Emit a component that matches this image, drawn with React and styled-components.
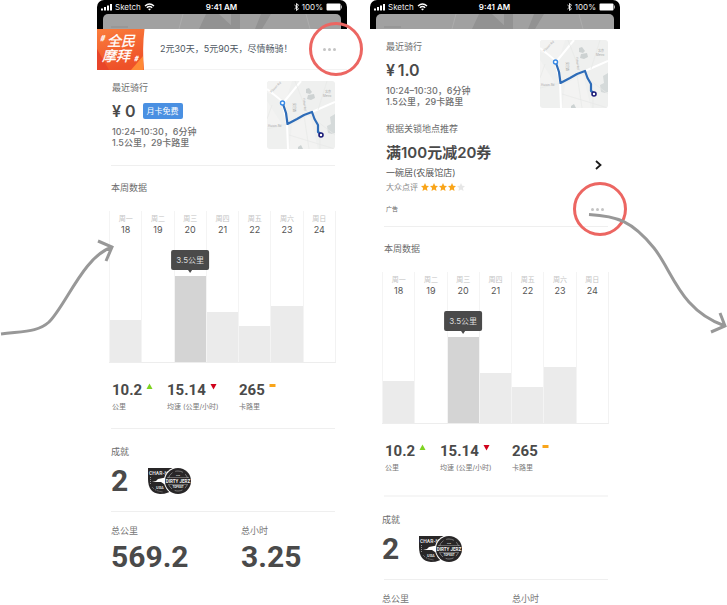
import React from "react";
import styled, { createGlobalStyle, css } from "styled-components";

const GlobalStyle = createGlobalStyle`
  *, *::before, *::after { box-sizing: border-box; }
  body {
    margin: 0;
    background: #fff;
    color: #4a4a4a;
    font-family: Inter, "Noto Sans CJK SC", sans-serif;
    font-size: 9px;
    line-height: 12px;
  }
  h1, h2, p, dl, dt, dd, ul { margin: 0; padding: 0; font: inherit; }
  button { border: 0; padding: 0; background: none; font: inherit; color: inherit; cursor: pointer; }
`;

const Board = styled.main`
  position: relative;
  display: grid;
  grid-template-columns: 97fr 250fr 23fr 250fr 107fr;
  min-height: 100vh;
  overflow: hidden;
`;

const Phone = styled.article`
  grid-column: ${(p) => p.$column};
  min-width: 0;
`;

const TopShade = styled.header`
  background: #000;
  border-radius: 7px 7px 0 0;
`;

const StatusBar = styled.div`
  display: grid;
  grid-template-columns: 1fr auto 1fr;
  align-items: center;
  height: 14px;
  padding: 0 5px 0 4px;
  color: #eee;
  font-size: 8px;
  line-height: 14px;
`;

const StatusGroup = styled.div`
  display: flex;
  align-items: center;
  justify-content: ${(p) => (p.$end ? "flex-end" : "flex-start")};
  gap: 3px;
`;

const Clock = styled.time`
  font-weight: 600;
  color: #fff;
`;

const Backdrop = styled.svg`
  display: block;
  width: calc(100% - 12px);
  height: 15px;
  margin: 0 6px;
  background: #a1a1a1;
  border-radius: 5px 5px 0 0;
`;

const Banner = styled.section`
  display: flex;
  align-items: center;
  height: 41px;
  padding-right: 11px;
  border-bottom: 1px solid #f3f3f3;
`;

const BannerArt = styled.svg`
  flex: none;
  width: 48px;
  height: 41px;
`;

const BannerText = styled.p`
  flex: 1;
  padding-left: 15px;
  font-size: 9px;
  color: #4d5661;
  white-space: nowrap;
`;

const MoreButton = styled.button`
  position: relative;
  display: flex;
  align-items: center;
  justify-content: center;
  gap: 2px;
  width: 14px;
  height: 10px;
  flex: none;

  span {
    width: 3px;
    height: 3px;
    border-radius: 50%;
    background: #c4c4c4;
  }

  &::after {
    content: "";
    position: absolute;
    top: 50%;
    left: ${(p) => p.$ringLeft};
    width: 54px;
    height: 54px;
    margin-top: -27px;
    border: 3px solid #ec6662;
    border-radius: 50%;
    pointer-events: none;
  }
`;

const Ride = styled.section`
  display: flex;
  justify-content: space-between;
  align-items: flex-start;
  padding: 11px 12px 0 ${(p) => p.$inset};
`;

const Title = styled.h2`
  font-size: 9px;
  line-height: 14px;
  color: #6c6c6c;
`;

const PriceRow = styled.div`
  display: flex;
  align-items: center;
  gap: 7px;
  height: 20px;
  margin: 6px 0 5px;
`;

const Price = styled.strong`
  font-size: 16px;
  line-height: 20px;
  font-weight: 600;
`;

const PassTag = styled.span`
  padding: 0 4px;
  border-radius: 2px;
  background: #4a90e2;
  color: #fff;
  font-size: 8px;
  line-height: 16px;
`;

const RideFact = styled.p`
  font-size: 9px;
  line-height: 11px;
  font-weight: 500;
  color: #707070;
`;

const MapPicture = styled.svg`
  flex: none;
  width: 68px;
  height: 68px;
  border-radius: 3px;
`;

const Rule = styled.hr`
  height: ${(p) => (p.$thick ? "2px" : "1px")};
  margin: ${(p) => p.$top} 12px 0 14px;
  border: 0;
  background: ${(p) => (p.$thick ? "#f6f6f6" : "#efefef")};
`;

const Coupon = styled.section`
  padding: 14px 16px 0;
`;

const CouponLink = styled.a`
  display: flex;
  align-items: center;
  justify-content: space-between;
  color: inherit;
  text-decoration: none;
`;

const Offer = styled.h1`
  margin: 6px 0 2px;
  font-size: 15px;
  line-height: 22px;
  font-weight: 600;
  white-space: nowrap;
`;

const Shop = styled.p`
  font-size: 9px;
  line-height: 14px;
  color: #555;
`;

const Rating = styled.div`
  display: flex;
  align-items: center;
  gap: 3px;
  height: 12px;
  margin-top: 1px;
  font-size: 8px;
  color: #888;
`;

const Stars = styled.span`
  display: flex;
  gap: 1px;
`;

const StarIcon = styled.svg`
  width: 8px;
  height: 8px;
  fill: ${(p) => (p.$on ? "#f9a51a" : "#e6e6e6")};
`;

const AdRow = styled.div`
  display: flex;
  align-items: center;
  justify-content: space-between;
  margin-top: 10px;
  font-size: 6px;
  line-height: 12px;
  color: #666;
`;

const Week = styled.section`
  padding: 15px 11px 0 12px;
`;

const WeekTitle = styled(Title)`
  padding-left: 2px;
`;

const Chart = styled.ul`
  display: grid;
  grid-template-columns: repeat(7, 1fr);
  height: 152px;
  margin-top: 16px;
  list-style: none;
  border-right: 1px solid #f2f2f2;
  border-bottom: 1px solid #ededed;
`;

const Day = styled.li`
  display: flex;
  flex-direction: column;
  align-items: center;
  padding-top: 3px;
  border-left: 1px solid #f4f4f4;
`;

const DayName = styled.span`
  font-size: 7px;
  line-height: 10px;
  color: #c4c4c4;
`;

const DayNumber = styled.span`
  font-size: 9px;
  line-height: 12px;
  color: #555;
`;

const Bar = styled.div`
  position: relative;
  width: 100%;
  margin-top: auto;
  background: ${(p) => (p.$active ? "#d4d4d4" : "#ebebeb")};
`;

const Tip = styled.span`
  position: absolute;
  bottom: calc(100% + 6px);
  left: 50%;
  transform: translateX(-50%);
  padding: 0 5px;
  border-radius: 2px;
  background: #4a4a4a;
  color: #ddd;
  font-size: 8px;
  line-height: 20px;
  white-space: nowrap;

  &::after {
    content: "";
    position: absolute;
    top: 100%;
    left: 50%;
    margin-left: -2px;
    border: 2px solid transparent;
    border-top: 3px solid #4a4a4a;
    border-bottom: 0;
  }
`;

const Stats = styled.dl`
  display: grid;
  grid-template-columns: 55px 72px 1fr;
  padding: 17px 12px 0 15px;
`;

const Stat = styled.div`
  display: flex;
  flex-direction: column-reverse;
  gap: 1px;
`;

const StatLabel = styled.dt`
  font-size: 7px;
  line-height: 12px;
  color: #777;
  white-space: nowrap;
`;

const din = css`
  font-family: "Liberation Sans Narrow", Roboto, "Noto Sans CJK SC", sans-serif;
  font-weight: 700;
  color: #4a4a4a;
`;

const StatValue = styled.dd`
  ${din}
  display: flex;
  gap: 4px;
  font-size: 15px;
  line-height: 20px;
`;

const Trend = styled.svg`
  width: 7px;
  height: 7px;
  margin-top: 3px;
`;

const Awards = styled.section`
  padding: ${(p) => p.$top} 12px 0 ${(p) => p.$inset};
`;

const AwardRow = styled.div`
  display: flex;
  align-items: center;
  gap: 19px;
  height: 32px;
  margin-top: 6px;
`;

const BigNumber = styled.strong`
  ${din}
  font-size: 30px;
  line-height: 32px;
`;

const Medals = styled.svg`
  width: 45px;
  height: 28px;
`;

const Totals = styled.section`
  display: grid;
  grid-template-columns: 130px 1fr;
  padding: 13px 12px 0 ${(p) => p.$inset};
`;

const TotalCell = styled.div`
  display: flex;
  flex-direction: column;
  gap: 4px;
`;

const TotalLabel = styled.span`
  font-size: 9px;
  line-height: 12px;
  color: #777;
`;

const Arrow = styled.svg`
  position: absolute;
  top: ${(p) => p.$top};
  ${(p) => (p.$right ? "right: 0;" : "left: 0;")}
  pointer-events: none;
  fill: none;
  stroke: #989898;
  stroke-width: 3;
`;

function PhoneTop() {
  return (
    <TopShade>
      <StatusBar>
        <StatusGroup>
          <svg width="11" height="7" viewBox="0 0 11 7" fill="#fff" aria-hidden="true">
            <rect x="0" y="4.5" width="2" height="2" />
            <rect x="3" y="3" width="2" height="3.5" />
            <rect x="6" y="1.5" width="2" height="5" />
            <rect x="9" y="0" width="2" height="6.5" />
          </svg>
          <span>Sketch</span>
          <svg width="11" height="8" viewBox="0 0 11 8" fill="none" stroke="#fff" strokeWidth="1.4" aria-hidden="true">
            <path d="M1 3Q5.5-1 10 3M2.8 4.8Q5.5 2.4 8.2 4.8" />
            <path d="M4 6l1.5 1.6L7 6Q5.5 5 4 6z" fill="#fff" stroke="none" />
          </svg>
        </StatusGroup>
        <Clock>9:41 AM</Clock>
        <StatusGroup $end>
          <svg width="5" height="8" viewBox="0 0 5 8" fill="none" stroke="#fff" strokeWidth="0.9" aria-hidden="true">
            <path d="M.5 2l4 3.8L2.5 7.5V.5l2 1.7-4 3.8" />
          </svg>
          <span>100%</span>
          <svg width="16" height="8" viewBox="0 0 16 8" aria-hidden="true">
            <rect x="0.5" y="0.5" width="14" height="7" rx="1" fill="#fff" />
            <rect x="15" y="2.5" width="1" height="3" fill="#aaa" />
          </svg>
        </StatusGroup>
      </StatusBar>
      <Backdrop viewBox="0 0 238 15" preserveAspectRatio="none" aria-hidden="true">
        <path d="M96 15L103 0h13l16 15zM128 0h9v15h-9zM152 15L158 0h10l-9 15z" fill="#929292" />
        <path d="M8 13h17" stroke="#8d8d8d" strokeWidth="1" />
        <path d="M76 15l4-15M203 0l4 15" stroke="#b2b2b2" strokeWidth="0.7" />
      </Backdrop>
    </TopShade>
  );
}

function More({ ringLeft }) {
  return (
    <MoreButton type="button" aria-label="更多" $ringLeft={ringLeft}>
      <span />
      <span />
      <span />
    </MoreButton>
  );
}

function RouteMap() {
  return (
    <MapPicture viewBox="0 0 68 68" role="img" aria-label="骑行路线">
      <rect width="68" height="68" fill="#eff0ef" />
      <path d="M0 0h25L19 19 0 12zM0 20l16 25H0zM25 44l18-10 8 34H22z" fill="#f3f3f2" />
      <path d="M39 8l3-1 3 4-2 2-4-1zM41 14l6-1 1 4-4 2-4-1z" fill="#cdd2d2" />
      <path d="M68 33l-5 3 1 7-4 2 1 7 4 1 3-1z" fill="#d5dada" />
      <path d="M31 66l3-2 2 4h-5z" fill="#ccd2d2" />
      <path d="M0 8l15 12 5 22 1 26M16 22L34 0M45 31l23-10" stroke="#fff" strokeWidth="2" fill="none" />
      <path d="M28 0l12 31M60 0l-9 29M42 34l26 20M22 54l46 14M53 54v14M37 34l5 34M5 24L0 38M0 48l21-5" stroke="#e6e8e7" strokeWidth="0.7" fill="none" />
      <g fill="#a8a8a8" fontSize="3">
        <text x="1" y="46">Huixin Rd</text>
        <text x="58" y="12">北京</text>
        <text x="56" y="16">Metro</text>
        <text transform="translate(4 12) rotate(-44)">Xiyuan Rd</text>
        <text transform="translate(26 22) rotate(90)">安定路</text>
        <text transform="translate(36 17) rotate(85)">Yuhui Rd</text>
      </g>
      <path d="M16 23l3 9 1.5 11L30 38l7-4 8-3 2.5 7 3.500 6v7l3 2" stroke="#2e6cb8" strokeWidth="2.2" fill="none" strokeLinejoin="round" />
      <circle cx="15.5" cy="22" r="2" fill="#fff" stroke="#3789e6" strokeWidth="1.4" />
      <circle cx="54" cy="54" r="2" fill="#fff" stroke="#1c1c78" strokeWidth="1.6" />
    </MapPicture>
  );
}

function RideSummary({ price, pass, inset }) {
  return (
    <Ride $inset={inset}>
      <div>
        <Title>最近骑行</Title>
        <PriceRow>
          <Price>{price}</Price>
          {pass && <PassTag>{pass}</PassTag>}
        </PriceRow>
        <RideFact>10:24–10:30，6分钟</RideFact>
        <RideFact>1.5公里，29卡路里</RideFact>
      </div>
      <RouteMap />
    </Ride>
  );
}

const days = [
  { name: "周一", number: 18, height: 42 },
  { name: "周二", number: 19, height: 0 },
  { name: "周三", number: 20, height: 86, tip: "3.5公里" },
  { name: "周四", number: 21, height: 50 },
  { name: "周五", number: 22, height: 36 },
  { name: "周六", number: 23, height: 56 },
  { name: "周日", number: 24, height: 0 },
];

function WeekChart() {
  return (
    <Week>
      <WeekTitle>本周数据</WeekTitle>
      <Chart>
        {days.map((day) => (
          <Day key={day.number}>
            <DayName>{day.name}</DayName>
            <DayNumber>{day.number}</DayNumber>
            <Bar $active={Boolean(day.tip)} style={{ height: day.height }}>
              {day.tip && <Tip>{day.tip}</Tip>}
            </Bar>
          </Day>
        ))}
      </Chart>
    </Week>
  );
}

const trends = {
  up: <path d="M3.5 0.5L6.500 6h-6z" fill="#7ed321" />,
  down: <path d="M3.5 6.5L6.500 1h-6z" fill="#d0021b" />,
  flat: <path d="M0.5 1h6v3h-6z" fill="#f9a51a" />,
};

const stats = [
  { value: "10.2", label: "公里", trend: "up" },
  { value: "15.14", label: "均速 (公里/小时)", trend: "down" },
  { value: "265", label: "卡路里", trend: "flat" },
];

function WeekStats() {
  return (
    <Stats>
      {stats.map((item) => (
        <Stat key={item.label}>
          <StatLabel>{item.label}</StatLabel>
          <StatValue>
            {item.value}
            <Trend viewBox="0 0 7 7" aria-hidden="true">
              {trends[item.trend]}
            </Trend>
          </StatValue>
        </Stat>
      ))}
    </Stats>
  );
}

function AwardSummary({ top, inset }) {
  return (
    <Awards $top={top} $inset={inset}>
      <Title>成就</Title>
      <AwardRow>
        <BigNumber>2</BigNumber>
        <Medals viewBox="0 0 45 28" role="img" aria-label="奖章">
          <path d="M1 1h27v20Q22 27 13 27 1 26 1 12z" fill="#282627" />
          <path d="M5 15l4-1 2-2 10-2v8l-4-1-3-2z" fill="#fff" />
          <g fill="#ddd" fontWeight="700" fontFamily="Roboto, sans-serif">
            <text x="2" y="8" fontSize="5">CHAR-H</text>
            <text x="9" y="22" fontSize="4">USA</text>
          </g>
          <path d="M5 20q3 4 11 5M3.500 10v7" stroke="#aaa" strokeWidth="0.8" strokeDasharray="1 1" fill="none" />
          <circle cx="31" cy="14" r="14" fill="#fff" />
          <circle cx="31" cy="14" r="13" fill="#282627" />
          <circle cx="31" cy="14" r="10" fill="none" stroke="#999" strokeWidth="0.7" strokeDasharray="8 3" />
          <rect x="20" y="11" width="22" height="7" fill="#282627" />
          <path d="M20 10.5h22M21 17.5h20" stroke="#aaa" strokeWidth="0.5" />
          <g fill="#eee" textAnchor="middle" fontWeight="700" fontFamily="Roboto, sans-serif">
            <text x="31" y="16" fontSize="4.5">DIRTY JERZ</text>
            <text x="31" y="9" fontSize="2">THE</text>
            <text x="31" y="21" fontSize="3">TOPEST</text>
          </g>
        </Medals>
      </AwardRow>
    </Awards>
  );
}

function TotalSummary({ items, inset }) {
  return (
    <Totals $inset={inset}>
      {items.map((item) => (
        <TotalCell key={item.label}>
          <TotalLabel>{item.label}</TotalLabel>
          {item.value && <BigNumber>{item.value}</BigNumber>}
        </TotalCell>
      ))}
    </Totals>
  );
}

function PromoBanner() {
  return (
    <Banner>
      <BannerArt viewBox="0 0 48 41" role="img" aria-label="全民摩拜">
        <defs>
          <linearGradient id="promo" x1="0" y1="0" x2="0.3" y2="1">
            <stop offset="0" stopColor="#fa7d3c" />
            <stop offset="1" stopColor="#ee5128" />
          </linearGradient>
        </defs>
        <path d="M0 0h47.5Q45 20 47 41H0z" fill="url(#promo)" />
        <path d="M0 20L12 41H0z" fill="#e8452a" />
        <path d="M34 41l12-14 .5 14z" fill="#ff8a35" />
        <g fill="#fff" fontFamily="'Noto Sans CJK SC', sans-serif" fontStyle="italic" fontWeight="400" stroke="#fff" strokeWidth="0.3">
          <text x="10" y="17" fontSize="14">全民</text>
          <text x="5" y="32" fontSize="14">摩拜</text>
          <text x="3" y="12" fontSize="8">#</text>
          <text x="37" y="32" fontSize="7">#</text>
        </g>
      </BannerArt>
      <BannerText>2元30天，5元90天，尽情畅骑！</BannerText>
      <More ringLeft="-13px" />
    </Banner>
  );
}

function CouponCard() {
  return (
    <Coupon>
      <Title>根据关锁地点推荐</Title>
      <CouponLink href="#coupon">
        <div>
          <Offer>满100元减20券</Offer>
          <Shop>一碗居(农展馆店)</Shop>
          <Rating>
            <span>大众点评</span>
            <Stars>
              {[1, 2, 3, 4, 5].map((n) => (
                <StarIcon key={n} $on={n < 5} viewBox="0 0 24 24" aria-hidden="true">
                  <path d="M12 0l3.7 8 8.3 1-6.2 6 1.700 9L12 19.500 4.500 24l1.700-9L0 9l8.300-1z" />
                </StarIcon>
              ))}
            </Stars>
          </Rating>
        </div>
        <svg width="10" height="12" viewBox="0 0 10 12" fill="none" stroke="#1a1a1a" strokeWidth="1.8" aria-hidden="true">
          <path d="M2 2L6.500 6 2 10" />
        </svg>
      </CouponLink>
      <AdRow>
        <span>广告</span>
        <More ringLeft="-17px" />
      </AdRow>
    </Coupon>
  );
}

export default function App() {
  return (
    <>
      <GlobalStyle />
      <Board>
        <Phone $column={2}>
          <PhoneTop />
          <PromoBanner />
          <RideSummary price="¥ 0" pass="月卡免费" inset="15px" />
          <Rule $top="16px" />
          <WeekChart />
          <WeekStats />
          <Rule $top="15px" />
          <AwardSummary top="16px" inset="14px" />
          <Rule $top="14px" />
          <TotalSummary
            inset="14px"
            items={[
              { label: "总公里", value: "569.2" },
              { label: "总小时", value: "3.25" },
            ]}
          />
        </Phone>
        <Phone $column={4}>
          <PhoneTop />
          <RideSummary price={"¥\u20091.0"} inset="16px" />
          <CouponCard />
          <Rule $top="11px" />
          <WeekChart />
          <WeekStats />
          <Rule $top="21px" $thick />
          <AwardSummary top="16px" inset="12px" />
          <Rule $top="14px" />
          <TotalSummary inset="12px" items={[{ label: "总公里" }, { label: "总小时" }]} />
        </Phone>
        <Arrow $top="235px" width="120" height="105" viewBox="0 0 120 105" aria-hidden="true">
          <path d="M1 99C25 96 38 97 49 87C66 70 84 21 112 12M98 6l14 6-6 14" />
        </Arrow>
        <Arrow $top="205px" $right width="142" height="135" viewBox="0 0 142 135" aria-hidden="true">
          <path d="M4 9.5C32 11 47 16 69 43C88 67 95 105 140 121M135 108l5 13-14 6" />
        </Arrow>
      </Board>
    </>
  );
}
